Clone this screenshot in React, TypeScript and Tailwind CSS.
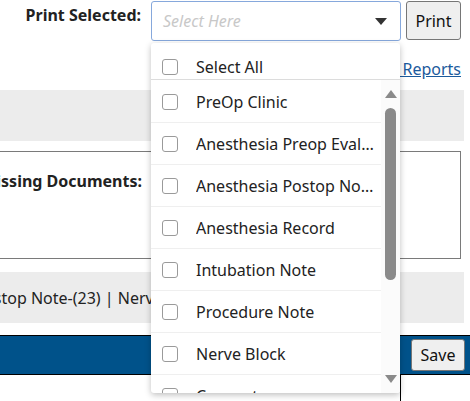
import React from "react";

const documentTypes = [
  "PreOp Clinic",
  "Anesthesia Preop Evaluation",
  "Anesthesia Postop Note",
  "Anesthesia Record",
  "Intubation Note",
  "Procedure Note",
  "Nerve Block",
  "Consent",
];

function Checkbox() {
  return (
    <span className="block w-[16px] h-[16px] shrink-0 rounded-[3px] border border-[#9a9a9a] bg-white" />
  );
}

function CheckList() {
  return (
    <div className="absolute left-[151px] top-[43px] w-[249px] h-[350px] bg-white rounded-[3px] shadow-[0_2px_6px_rgba(0,0,0,0.25)] flex flex-col overflow-hidden">
      <div className="h-[37px] shrink-0 flex items-center pl-[11px] pt-[11px] border-b border-[#dcdcdc]">
        <Checkbox />
        <span className="ml-[18px] text-[#222]">Select All</span>
      </div>
      <div className="flex flex-1 min-h-0">
        <div className="flex-1 min-w-0 overflow-hidden pt-[1px]">
          {documentTypes.map((name) => (
            <div
              key={name}
              className="h-[42px] flex items-center pl-[11px] pr-[6px] border-b border-[#efefef]"
            >
              <Checkbox />
              <span className="ml-[18px] truncate text-[#222]">{name}</span>
            </div>
          ))}
        </div>
        {/* scrollbar */}
        <div className="w-[19px] shrink-0 flex flex-col items-center bg-[#fbfbfb] pt-[10px] pb-[10px]">
          <svg width="12" height="8" viewBox="0 0 12 8">
            <path d="M6 0L12 8H0z" fill="#8a8a8a" />
          </svg>
          <div className="mt-[10px] w-[11px] h-[172px] rounded-full bg-[#8a8a8a]" />
          <div className="flex-1" />
          <svg width="12" height="8" viewBox="0 0 12 8">
            <path d="M0 0H12L6 8z" fill="#8a8a8a" />
          </svg>
        </div>
      </div>
    </div>
  );
}

export default function App() {
  return (
    <div className="relative w-[470px] h-[401px] overflow-hidden bg-white text-[16px] text-[#222] font-['Noto_Sans',sans-serif]">
      {/* print toolbar */}
      <div className="flex items-start pt-[1px] h-[42px]">
        <div className="w-[141px] flex justify-end pt-[2px]">
          <span className="font-bold whitespace-nowrap">Print Selected:</span>
        </div>
        <div className="ml-[10px] w-[250px] h-[40px] rounded-[3px] border border-[#86a8dc] flex items-center pl-[11px] pr-[13px]">
          <span className="italic text-[#c8c8c8] flex-1">Select Here</span>
          <svg width="12" height="7" viewBox="0 0 12 7">
            <path d="M0 0H12L6 7z" fill="#333" />
          </svg>
        </div>
        <button className="ml-[5px] w-[55px] h-[39px] rounded-[3px] border border-[#767676] bg-[#efefef] text-[#111]">
          Print
        </button>
      </div>

      <div className="h-[48px] flex items-center justify-end pr-[9px] pt-[6px]">
        <a href="#" className="text-[#1b5a9c] underline whitespace-nowrap">
          View Reports
        </a>
      </div>

      <div className="h-[51px] w-[464px] bg-[#ececec]" />

      {/* missing documents panel */}
      <div className="mt-[10px] h-[108px] w-[462px] -ml-px border border-[#7a7a7a] pt-[17px]">
        <div className="w-[142px] flex justify-end">
          <span className="font-bold whitespace-nowrap">Missing Documents:</span>
        </div>
      </div>

      <div className="mt-[13px] h-[51px] w-[464px] bg-[#ececec] flex items-center overflow-hidden">
        <span className="whitespace-nowrap -ml-[112px]">
          Anesthesia Postop Note-(23) | Nerve Block-(12) | Procedure Note-(6)
        </span>
      </div>

      <div className="mt-[12px] h-[40px] bg-[#00528a] border-y border-black flex items-center justify-end pr-[5px]">
        <button className="w-[54px] h-[32px] rounded-[3px] border border-[#767676] bg-[#efefef] text-[#111]">
          Save
        </button>
      </div>

      <div className="h-[30px] w-[401px] border-r border-black" />

      <CheckList />
    </div>
  );
}
